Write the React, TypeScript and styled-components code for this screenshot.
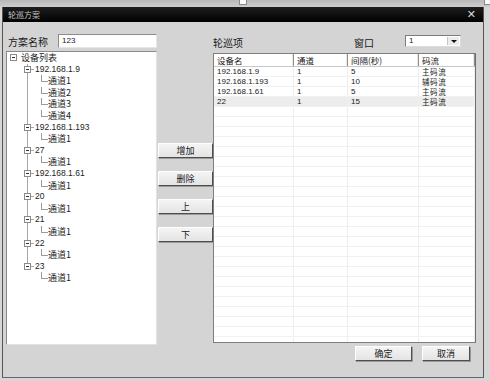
import React from 'react';
import styled, { createGlobalStyle } from 'styled-components';

const GlobalStyle = createGlobalStyle`
  body {
    margin: 0;
    background: #cfcfcf;
    font-family: "Liberation Sans", "Noto Sans CJK SC", sans-serif;
  }
`;

interface IDevice {
  name: string;
  channels: string[];
}

const devices: IDevice[] = [
  { name: '192.168.1.9', channels: ['通道1', '通道2', '通道3', '通道4'] },
  { name: '192.168.1.193', channels: ['通道1'] },
  { name: '27', channels: ['通道1'] },
  { name: '192.168.1.61', channels: ['通道1'] },
  { name: '20', channels: ['通道1'] },
  { name: '21', channels: ['通道1'] },
  { name: '22', channels: ['通道1'] },
  { name: '23', channels: ['通道1'] },
];

const patrolRows = [
  ['192.168.1.9', '1', '5', '主码流'],
  ['192.168.1.193', '1', '10', '辅码流'],
  ['192.168.1.61', '1', '5', '主码流'],
  ['22', '1', '15', '主码流'],
];

const columns = [
  { title: '设备名', width: 80 },
  { title: '通道', width: 54 },
  { title: '间隔(秒)', width: 71 },
  { title: '码流', width: 56 },
];

const Screen = styled.div`
  width: 490px;
  height: 381px;
  background: #d6d6d6;
  position: relative;
  overflow: hidden;
  display: flex;
  flex-direction: column;
`;

const TopStrip = styled.div`
  height: 7px;
  background: linear-gradient(#b9b9b9, #cdcdcd);
`;

const Handle = styled.span<{ left: number }>`
  position: absolute;
  top: 0;
  left: ${p => p.left}px;
  width: 6px;
  height: 4px;
  background: #fafafa;
  border: 1px solid #8a8a8a;
  border-top: none;
`;

const Dialog = styled.div`
  height: 370px;
  margin: 0 6px 0 2px;
  border-left: 1px solid #555;
  border-right: 1px solid #555;
  border-bottom: 1px solid #666;
  display: flex;
  flex-direction: column;
`;

const TitleBar = styled.div`
  height: 15px;
  background: linear-gradient(#1e1e1e, #000);
  display: flex;
  align-items: center;
  justify-content: space-between;
  padding: 0 7px 0 5px;
  color: #c4c4c4;
  font-family: "Noto Sans CJK SC", sans-serif;
  font-size: 8px;
`;

const CloseMark = styled.span`
  color: #d8d8d8;
  font-family: "DejaVu Sans", sans-serif;
  font-size: 11px;
  line-height: 1;
`;

const Body = styled.div`
  flex: 1;
  background: #d4d4d4;
  display: flex;
  padding: 12px 0 0 3px;
`;

const LeftPane = styled.div`
  width: 151px;
  display: flex;
  flex-direction: column;
`;

const FieldRow = styled.div`
  height: 14px;
  display: flex;
  align-items: center;
`;

const Label = styled.span<{ width?: number }>`
  width: ${p => (p.width ? `${p.width}px` : 'auto')};
  padding-left: 2px;
  font-family: "Noto Sans CJK SC", sans-serif;
  font-size: 10px;
  color: #1a1a1a;
  box-sizing: border-box;
`;

const TextInput = styled.div`
  flex: 1;
  height: 14px;
  box-sizing: border-box;
  background: #fff;
  border: 1px solid #8c8c8c;
  border-right-color: #e6e6e6;
  border-bottom-color: #e6e6e6;
  font-size: 8px;
  line-height: 12px;
  padding-left: 3px;
  color: #222;
`;

const TreeBox = styled.div`
  margin-top: 3px;
  height: 294px;
  box-sizing: border-box;
  background: #fff;
  border: 1px solid #8a8a8a;
  border-right-color: #e2e2e2;
  border-bottom-color: #e2e2e2;
  overflow: hidden;
`;

type Trunk = 'full' | 'top' | 'none';

const TreeRow = styled.div<{ indent: number; trunk: Trunk }>`
  position: relative;
  height: 11.6px;
  line-height: 11.6px;
  padding-left: ${p => p.indent}px;
  font-size: 8.5px;
  color: #1c1c1c;
  white-space: nowrap;
  &::before {
    content: '';
    display: ${p => (p.trunk === 'none' ? 'none' : 'block')};
    position: absolute;
    left: 20px;
    top: 0;
    height: ${p => (p.trunk === 'top' ? '50%' : '100%')};
    border-left: 1px solid #a8a8a8;
  }
`;

const Expander = styled.span<{ left: number; tick?: boolean }>`
  position: absolute;
  left: ${p => p.left}px;
  top: 2px;
  width: 7px;
  height: 7px;
  box-sizing: border-box;
  border: 1px solid #8a8a8a;
  background: #fff;
  z-index: 1;
  &::before {
    content: '';
    position: absolute;
    left: 1px;
    top: 2px;
    width: 3px;
    border-top: 1px solid #333;
  }
  &::after {
    content: '';
    display: ${p => (p.tick ? 'block' : 'none')};
    position: absolute;
    left: 6px;
    top: 2px;
    width: 3px;
    border-top: 1px solid #a8a8a8;
  }
`;

const Elbow = styled.span`
  position: absolute;
  left: 34px;
  top: 0;
  width: 6px;
  height: 6px;
  border-left: 1px solid #9a9a9a;
  border-bottom: 1px solid #9a9a9a;
`;

const CjkText = styled.span`
  font-family: "Noto Sans CJK SC", sans-serif;
  font-size: 9px;
`;

const Middle = styled.div`
  width: 56px;
  padding: 109px 0 0 1px;
  box-sizing: border-box;
  display: flex;
  flex-direction: column;
  gap: 13px;
`;

const Button = styled.div<{ width?: number }>`
  width: ${p => p.width ?? 55}px;
  height: 15px;
  box-sizing: border-box;
  background: linear-gradient(#f4f4f4, #e4e4e4);
  border: 1px solid #fff;
  border-right-color: #4e4e4e;
  border-bottom-color: #4e4e4e;
  box-shadow: 1px 1px 0 #9a9a9a;
  display: flex;
  align-items: center;
  justify-content: center;
  font-family: "Noto Sans CJK SC", sans-serif;
  font-size: 9px;
  color: #1a1a1a;
`;

const RightPane = styled.div`
  width: 263px;
  display: flex;
  flex-direction: column;
`;

const PaneHeader = styled.div`
  height: 16px;
  display: flex;
  align-items: center;
  & > span:first-child {
    padding-left: 0;
  }
`;

const Select = styled.div`
  margin-left: 31px;
  width: 56px;
  height: 12px;
  margin-top: -2px;
  box-sizing: border-box;
  background: #fff;
  border: 1px solid #7c7c7c;
  border-right-color: #dcdcdc;
  border-bottom-color: #dcdcdc;
  display: flex;
  font-size: 8px;
  line-height: 10px;
  color: #222;
`;

const SelectValue = styled.span`
  flex: 1;
  padding-left: 3px;
`;

const SelectArrow = styled.span`
  width: 11px;
  margin: 1px;
  background: #ececec;
  border-left: 1px solid #c4c4c4;
  display: flex;
  align-items: center;
  justify-content: center;
  &::after {
    content: '';
    border-left: 3px solid transparent;
    border-right: 3px solid transparent;
    border-top: 3px solid #111;
  }
`;

const Table = styled.div`
  margin-top: 3px;
  height: 290px;
  box-sizing: border-box;
  background: #fff;
  border: 1px solid #7e7e7e;
  border-right-color: #6e6e6e;
  overflow: hidden;
`;

const HeaderRow = styled.div`
  display: flex;
  height: 12px;
  border-bottom: 1px solid #c8c8c8;
`;

const HeaderCell = styled.div<{ width: number }>`
  width: ${p => p.width}px;
  box-sizing: border-box;
  padding-left: 3px;
  border-right: 1px solid #8e8e8e;
  box-shadow: inset -1px 0 0 #e8e8e8;
  font-family: "Noto Sans CJK SC", sans-serif;
  font-size: 8.5px;
  line-height: 12px;
  color: #1a1a1a;
`;

const DataRow = styled.div<{ selected?: boolean }>`
  display: flex;
  height: 10px;
  background: ${p => (p.selected ? '#ededed' : 'transparent')};
  border-bottom: 1px solid #f1f1f1;
  box-sizing: border-box;
`;

const DataCell = styled.div<{ width: number }>`
  width: ${p => p.width}px;
  box-sizing: border-box;
  padding-left: 3px;
  border-right: 1px solid #efefef;
  font-size: 8px;
  line-height: 10px;
  color: #1a1a1a;
  white-space: nowrap;
  & > span {
    font-family: "Noto Sans CJK SC", sans-serif;
    font-size: 7.5px;
    letter-spacing: 0.6px;
  }
`;

const Footer = styled.div`
  margin-top: 3px;
  padding-left: 142px;
  display: flex;
  gap: 10px;
`;

const isCjk = (s: string) => /[\u4e00-\u9fff]/.test(s);

const DeviceTree = () => {
  const rows: React.ReactNode[] = [];
  rows.push(
    <TreeRow key="root" indent={14} trunk="none">
      <Expander left={3} />
      <CjkText>设备列表</CjkText>
    </TreeRow>
  );
  devices.forEach((d, i) => {
    const last = i === devices.length - 1;
    rows.push(
      <TreeRow key={d.name} indent={28} trunk={last ? 'top' : 'full'}>
        <Expander left={17} tick />
        {d.name}
      </TreeRow>
    );
    d.channels.forEach(c => {
      rows.push(
        <TreeRow key={d.name + c} indent={41} trunk={last ? 'none' : 'full'}>
          <Elbow />
          <CjkText>{c}</CjkText>
        </TreeRow>
      );
    });
  });
  return <TreeBox>{rows}</TreeBox>;
};

const PatrolTable = () => {
  const empty = Array.from({ length: 24 });
  return (
    <Table>
      <HeaderRow>
        {columns.map(c => (
          <HeaderCell key={c.title} width={c.width}>
            {c.title}
          </HeaderCell>
        ))}
      </HeaderRow>
      {patrolRows.map((r, i) => (
        <DataRow key={i} selected={i === 3}>
          {r.map((v, j) => (
            <DataCell key={j} width={columns[j].width}>
              {isCjk(v) ? <span>{v}</span> : v}
            </DataCell>
          ))}
        </DataRow>
      ))}
      {empty.map((_, i) => (
        <DataRow key={'e' + i}>
          {columns.map(c => (
            <DataCell key={c.title} width={c.width} />
          ))}
        </DataRow>
      ))}
    </Table>
  );
};

const App = () => {
  return (
    <Screen>
      <GlobalStyle />
      <TopStrip />
      <Handle left={239} />
      <Handle left={484} />
      <Dialog>
        <TitleBar>
          <span>轮巡方案</span>
          <CloseMark>✕</CloseMark>
        </TitleBar>
        <Body>
          <LeftPane>
            <FieldRow>
              <Label width={52}>方案名称</Label>
              <TextInput>123</TextInput>
            </FieldRow>
            <DeviceTree />
          </LeftPane>
          <Middle>
            <Button>增加</Button>
            <Button>删除</Button>
            <Button>上</Button>
            <Button>下</Button>
          </Middle>
          <RightPane>
            <PaneHeader>
              <Label width={139}>轮巡项</Label>
              <Label>窗口</Label>
              <Select>
                <SelectValue>1</SelectValue>
                <SelectArrow />
              </Select>
            </PaneHeader>
            <PatrolTable />
            <Footer>
              <Button width={57}>确定</Button>
              <Button width={48}>取消</Button>
            </Footer>
          </RightPane>
        </Body>
      </Dialog>
    </Screen>
  );
};

export default App;
